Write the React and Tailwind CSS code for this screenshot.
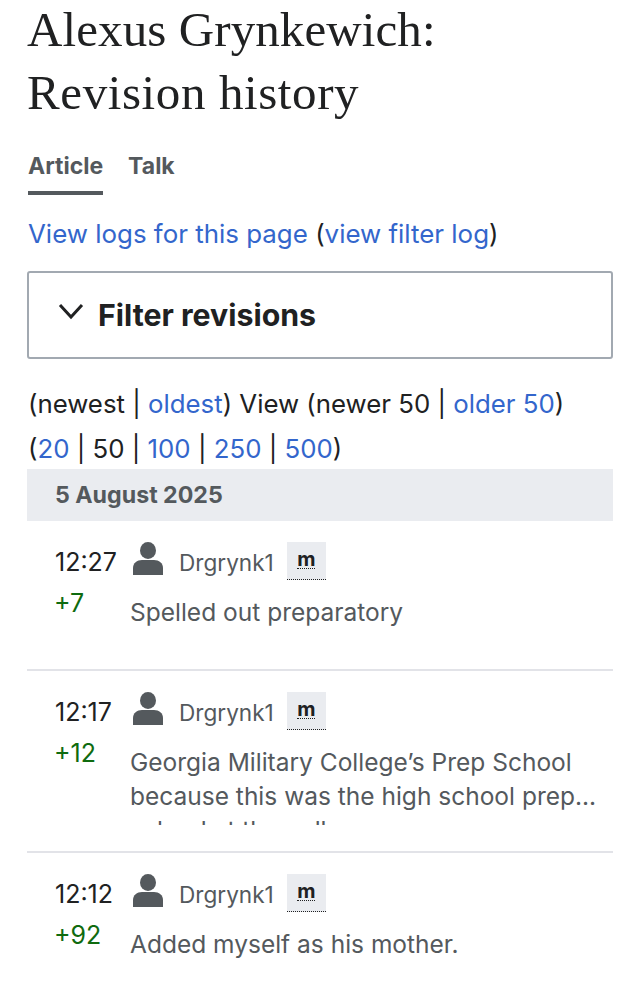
import React from 'react';

const UserIcon = () => (
  <svg width="32" height="33" viewBox="0 0 32 33" fill="#54595d" className="ml-[2px] shrink-0">
    <ellipse cx="16" cy="8.5" rx="8" ry="8.5" />
    <path d="M1 33v-7c0-5 4-8 9-8h12c5 0 9 3 9 8v7z" />
  </svg>
);

const MinorBadge = () => (
  <span className="ml-[13px] flex h-[38px] w-[39px] shrink-0 flex-col items-center border-b border-dotted border-[#202122] bg-[#eaecf0] pt-[9px] text-[20px] leading-[17px] font-bold text-[#202122]">
    <span className="border-b border-dotted border-[#202122]">m</span>
  </span>
);

const Revision = ({ time, diff, children, clip, className }) => (
  <div className={className}>
    <div className="grid grid-cols-[75px_1fr] pl-[28px] pt-[21px]">
      <div>
        <div className="text-[25px] leading-[40px] text-[#202122]">{time}</div>
        <div className="ml-[-1px] mt-[5px] text-[25px] leading-[32px] text-[#0f6b0f]">{diff}</div>
      </div>
      <div>
        <div className="flex h-[40px] items-start">
          <UserIcon />
          <span className="ml-[15px] mt-[7px] text-[22.6px] leading-[28px] text-[#54595d]">Drgrynk1</span>
          <MinorBadge />
        </div>
        <div className={`mt-[13px] text-[24.5px] leading-[34px] text-[#54595d] ${clip ? 'h-[80px] overflow-hidden' : ''}`}>
          {children}
        </div>
      </div>
    </div>
  </div>
);

export default function App() {
  const link = 'text-[#3366cc]';
  return (
    <div className="h-[1000px] w-[640px] overflow-hidden bg-white px-[27px] font-['Inter','Liberation_Sans',sans-serif] text-[#202122]">
      <h1 className="mt-[-2px] font-['Liberation_Serif',serif] text-[49px] leading-[63px] text-[#202122]">
        <span className="tracking-[0.1px]">Alexus Grynkewich:</span>
        <br />
        <span className="tracking-[0.6px]">Revision history</span>
      </h1>

      <div className="ml-[1px] mt-[21px] flex gap-[25px] text-[23px] font-bold text-[#54595d]">
        <span className="h-[50px] border-b-4 border-[#54595d] pt-[5px] leading-[32px]">Article</span>
        <span className="pt-[5px] leading-[32px]">Talk</span>
      </div>

      <p className="ml-[1px] mt-[17px] text-[25.9px] leading-[44px]">
        <a className={link}>View logs for this page</a> (<a className={link}>view filter log</a>)
      </p>

      <div className="mt-[15px] flex h-[88px] items-start rounded-[3px] border-2 border-[#a2a9b1] pl-[29px] pt-[23px]">
        <svg width="26" height="26" viewBox="0 0 26 26" fill="none" stroke="#202122" strokeWidth="3" className="mt-[2px]">
          <path d="M2 7l11 12L24 7" />
        </svg>
        <span className="ml-[14px] text-[30.3px] leading-[38px] font-bold">Filter revisions</span>
      </div>

      <p className="ml-[1px] mt-[22px] text-[25.8px] leading-[45px]">
        (newest | <a className={link}>oldest</a>) View (newer 50 | <a className={link}>older 50</a>)
        <br />
        (<a className={link}>20</a> | 50 | <a className={link}>100</a> | <a className={link}>250</a> | <a className={link}>500</a>)
      </p>

      <div className="mt-[-2px] h-[52px] bg-[#eaecf0] pl-[28px] text-[23.2px] leading-[53px] font-bold text-[#54595d]">5 August 2025</div>

      <Revision time="12:27" diff="+7" className="h-[150px] border-b-2 border-[#e2e3e8]">Spelled out preparatory</Revision>
      <Revision time="12:17" diff="+12" className="h-[182px] border-b-2 border-[#e2e3e8]" clip>
        Georgia Military College’s Prep School because this was the high school prep... school at the college
      </Revision>
      <Revision time="12:12" diff="+92" className="h-[147px]">Added myself as his mother.</Revision>
    </div>
  );
}
